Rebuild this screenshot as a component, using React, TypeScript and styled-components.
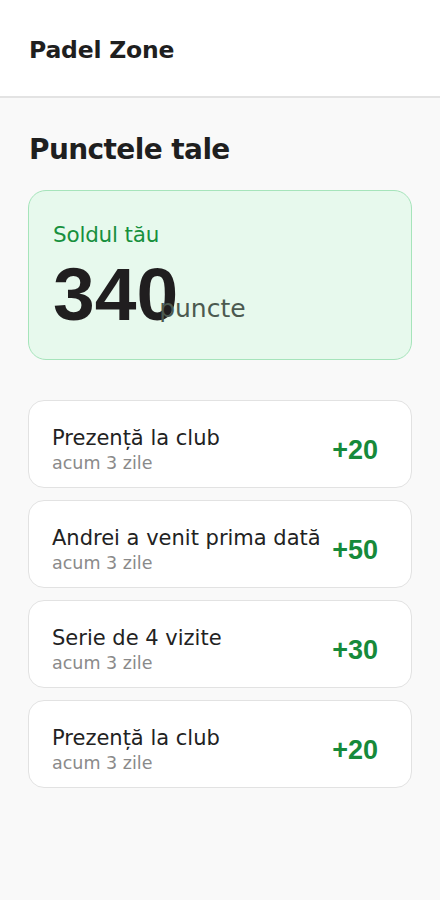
import styled, { createGlobalStyle } from 'styled-components';

const GlobalStyle = createGlobalStyle`
	html, body {
		margin: 0;
		padding: 0;
		background: #f9f9f9;
	}
	* {
		box-sizing: border-box;
	}
`;

const Page = styled.div`
	min-height: 900px;
	background: #f9f9f9;
	font-family: "DejaVu Sans", "Noto Sans", sans-serif;
	color: #1f1f1f;
`;

const Header = styled.header`
	height: 98px;
	background: #ffffff;
	border-bottom: 2px solid #e3e3e3;
	display: flex;
	align-items: center;
	padding: 4px 29px 0;

	h1 {
		margin: 0;
		font-size: 23.5px;
		font-weight: 700;
		letter-spacing: -0.2px;
	}
`;

const Main = styled.main`
	padding: 30px 28px 40px;
	display: flex;
	flex-direction: column;
`;

const Title = styled.h2`
	margin: 0 0 18px 1px;
	font-size: 28px;
	line-height: 44px;
	font-weight: 700;
	letter-spacing: -0.6px;
`;

const BalanceCard = styled.section`
	height: 170px;
	background: #e7f9ed;
	border: 1.5px solid #a6e4bb;
	border-radius: 18px;
	padding: 29px 24px 28px;
	margin-bottom: 40px;

	.label {
		font-size: 21.5px;
		line-height: 30px;
		color: #17903d;
		letter-spacing: -0.2px;
	}

	.amount {
		display: flex;
		align-items: baseline;
		margin-top: 6px;
	}

	.value {
		font-family: "Liberation Sans", Arial, sans-serif;
		font-size: 75px;
		line-height: 76px;
		font-weight: 700;
		color: #201e1f;
	}

	.unit {
		font-size: 25px;
		color: #4c5a50;
		margin-left: -19px;
		position: relative;
		top: -3px;
	}
`;

const List = styled.div`
	display: flex;
	flex-direction: column;
	gap: 12px;
`;

const Row = styled.div`
	height: 88px;
	background: #ffffff;
	border: 1.5px solid #e2e2e2;
	border-radius: 16px;
	padding: 0 33px 0 23px;
	display: flex;
	align-items: center;
	justify-content: space-between;
`;

const RowText = styled.div`
	display: flex;
	flex-direction: column;
	padding-top: 11px;

	.what {
		font-size: 21px;
		line-height: 26px;
		color: #222222;
		white-space: nowrap;
	}

	.when {
		font-size: 17.5px;
		line-height: 24px;
		color: #8a8a8a;
	}
`;

const Points = styled.div`
	font-family: "Liberation Sans", Arial, sans-serif;
	font-size: 27px;
	font-weight: 700;
	color: #168a3a;
	margin-top: 12px;
`;

const history = [
	{ what: 'Prezență la club', when: 'acum 3 zile', points: 20 },
	{ what: 'Andrei a venit prima dată', when: 'acum 3 zile', points: 50 },
	{ what: 'Serie de 4 vizite', when: 'acum 3 zile', points: 30 },
	{ what: 'Prezență la club', when: 'acum 3 zile', points: 20 },
];

const App = () => {
	return (
		<Page>
			<GlobalStyle />
			<Header>
				<h1>Padel Zone</h1>
			</Header>
			<Main>
				<Title>Punctele tale</Title>
				<BalanceCard>
					<div className="label">Soldul tău</div>
					<div className="amount">
						<span className="value">340</span>
						<span className="unit">puncte</span>
					</div>
				</BalanceCard>
				<List>
					{history.map((item, i) => (
						<Row key={i}>
							<RowText>
								<span className="what">{item.what}</span>
								<span className="when">{item.when}</span>
							</RowText>
							<Points>+{item.points}</Points>
						</Row>
					))}
				</List>
			</Main>
		</Page>
	);
};

export default App;
